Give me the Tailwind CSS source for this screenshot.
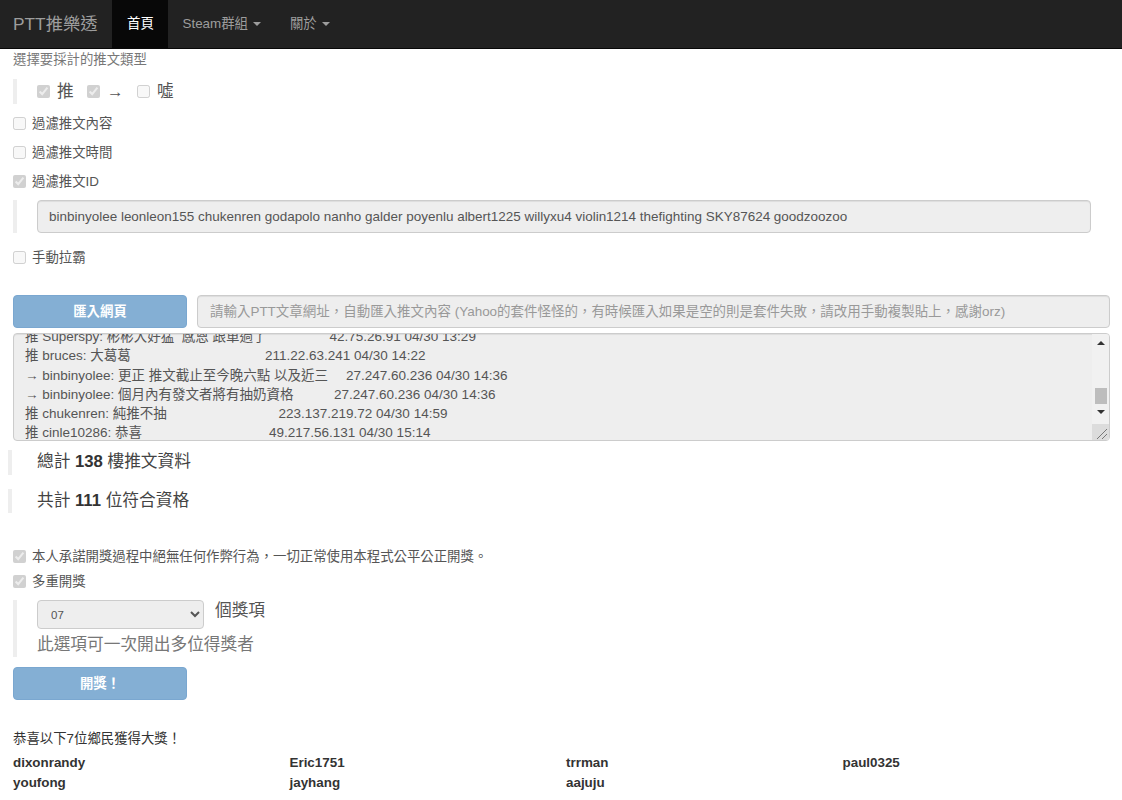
<!DOCTYPE html>
<html lang="zh-Hant">
<head>
<meta charset="utf-8">
<title>PTT推樂透</title>
<script src="https://cdn.jsdelivr.net/npm/@tailwindcss/browser@4"></script>
</head>
<body class="bg-white text-[#333] text-[13.4px] leading-[19.3px] font-['Liberation_Sans','Noto_Sans_CJK_TC',sans-serif] h-[800px] overflow-hidden">
<nav class="h-[49px] bg-[#222] border-b border-[#080808] flex text-[#9d9d9d]">
  <a class="pl-[13px] pr-[15px] text-[17.3px] leading-[48px]">PTT推樂透</a>
  <a class="w-[56px] bg-[#080808] text-white leading-[48px] text-center">首頁</a>
  <a class="px-[14px] leading-[48px] flex items-center gap-[5px]">Steam群組<span class="w-0 h-0 border-x-[4px] border-x-transparent border-t-[4px] border-t-[#9d9d9d]"></span></a>
  <a class="px-[15px] leading-[48px] flex items-center gap-[5px]">關於<span class="w-0 h-0 border-x-[4px] border-x-transparent border-t-[4px] border-t-[#9d9d9d]"></span></a>
</nav>
<main class="pl-[13px] pr-[12px]">
  <p class="text-[#777] mt-[1px] h-[19px]">選擇要採計的推文類型</p>
  <div class="mt-[10px] h-[25px] border-l-[4px] border-[#eee] pl-[20px] flex items-center text-[16.7px] text-[#555]">
    <input type="checkbox" checked disabled class="mr-[7px]"><span class="w-[30px]">推</span>
    <input type="checkbox" checked disabled class="mr-[7px]"><span class="w-[30px]">→</span>
    <input type="checkbox" disabled class="mr-[7px]"><span>噓</span>
  </div>
  <label class="flex items-center mt-[10px] h-[19px] text-[#555]"><input type="checkbox" disabled class="mr-[6px]">過濾推文內容</label>
  <label class="flex items-center mt-[10px] h-[19px] text-[#555]"><input type="checkbox" disabled class="mr-[6px]">過濾推文時間</label>
  <label class="flex items-center mt-[10px] h-[19px] text-[#555]"><input type="checkbox" checked disabled class="mr-[6px]">過濾推文ID</label>
  <div class="mt-[9px] h-[33px] border-l-[4px] border-[#eee] pl-[20px] pr-[19px]">
    <input disabled value="binbinyolee leonleon155 chukenren godapolo nanho galder poyenlu albert1225 willyxu4 violin1214 thefighting SKY87624 goodzoozoo" class="w-full h-[33px] px-[11px] bg-[#eee] border border-[#ccc] rounded-[4px] text-[13.47px] text-[#555] shadow-[inset_0_1px_1px_rgba(0,0,0,0.075)]">
  </div>
  <label class="flex items-center mt-[15px] h-[19px] text-[#555]"><input type="checkbox" disabled class="mr-[6px]">手動拉霸</label>
  <div class="mt-[28px] flex gap-[10px] h-[33px]">
    <button disabled class="w-[174px] bg-[#84afd4] border border-[#7aa7d0] rounded-[4px] text-white font-bold">匯入網頁</button>
    <input disabled placeholder="請輸入PTT文章網址，自動匯入推文內容 (Yahoo的套件怪怪的，有時候匯入如果是空的則是套件失敗，請改用手動複製貼上，感謝orz)" class="flex-1 px-[12px] bg-[#eee] border border-[#ccc] rounded-[4px] text-[13.47px] placeholder:text-[#999] shadow-[inset_0_1px_1px_rgba(0,0,0,0.075)]">
  </div>
  <div class="relative mt-[5px] h-[108px] bg-[#eee] border border-[#ccc] rounded-[4px] overflow-hidden pl-[11px] text-[13.5px] leading-[19.3px] text-[#555] shadow-[inset_0_1px_1px_rgba(0,0,0,0.075)]">
    <div class="-mt-[7px] flex"><span class="w-[304.5px] whitespace-pre">推 Superspy: 彬彬大好猛  感恩 跟單過了</span><span>42.75.26.91 04/30 13:29</span></div>
    <div class="flex"><span class="w-[240px]">推 bruces: 大葛葛</span><span>211.22.63.241 04/30 14:22</span></div>
    <div class="flex"><span class="w-[321px]">→ binbinyolee: 更正 推文截止至今晚六點 以及近三</span><span>27.247.60.236 04/30 14:36</span></div>
    <div class="flex"><span class="w-[309px]">→ binbinyolee: 個月內有發文者將有抽奶資格</span><span>27.247.60.236 04/30 14:36</span></div>
    <div class="flex"><span class="w-[253.5px]">推 chukenren: 純推不抽</span><span>223.137.219.72 04/30 14:59</span></div>
    <div class="flex"><span class="w-[244px]">推 cinle10286: 恭喜</span><span>49.217.56.131 04/30 15:14</span></div>
    <div class="absolute top-0 right-0 bottom-0 w-[17px] bg-[#f1f1f1] flex flex-col items-center">
      <span class="mt-[7px] w-0 h-0 border-x-[4px] border-x-transparent border-b-[4px] border-b-[#333]"></span>
      <span class="mt-[43px] w-[12px] h-[16px] bg-[#bdbdbd]"></span>
      <span class="mt-[6px] w-0 h-0 border-x-[4px] border-x-transparent border-t-[4px] border-t-[#333]"></span>
      <svg class="mt-auto bg-[#dcdcdc]" width="17" height="16" viewBox="0 0 17 16"><path d="M5 15 15 5M10 15l5-5" stroke="#777" stroke-width="1" fill="none"/></svg>
    </div>
  </div>
  <div class="-ml-[5px] mt-[9px] h-[25px] border-l-[4px] border-[#eee] pl-[25px] text-[16.7px] leading-[23px] text-[#444]">總計 <b class="text-[#333]">138</b> 樓推文資料</div>
  <div class="-ml-[5px] mt-[14px] h-[24px] border-l-[4px] border-[#eee] pl-[25px] text-[16.7px] leading-[24px] text-[#444]">共計 <b class="text-[#333]">111</b> 位符合資格</div>
  <label class="flex items-center mt-[34px] h-[19px] text-[#555]"><input type="checkbox" checked disabled class="mr-[6px]">本人承諾開獎過程中絕無任何作弊行為，一切正常使用本程式公平公正開獎。</label>
  <label class="flex items-center mt-[6px] h-[19px] text-[#555]"><input type="checkbox" checked disabled class="mr-[6px]">多重開獎</label>
  <div class="mt-[9px] h-[57px] border-l-[4px] border-[#eee] pl-[20px]">
    <div class="flex h-[29px]">
      <select disabled class="w-[167px] h-[29px] pl-[9px] bg-[#eee] border border-[#ccc] rounded-[4px] text-[11.5px] text-[#555] opacity-100"><option>07</option></select>
      <span class="ml-[11px] text-[16.7px] leading-[21px] text-[#555]">個獎項</span>
    </div>
    <div class="mt-[4px] text-[16.7px] leading-[24px] text-[#777]">此選項可一次開出多位得獎者</div>
  </div>
  <button disabled class="block mt-[10px] w-[174px] h-[33px] bg-[#84afd4] border border-[#7aa7d0] rounded-[4px] text-white font-bold">開獎！</button>
  <p class="mt-[29px] h-[19px]">恭喜以下7位鄉民獲得大獎！</p>
  <div class="mt-[5px] w-[1106px] grid grid-cols-4 font-bold text-[13.4px] leading-[20px]">
    <div>dixonrandy</div><div>Eric1751</div><div>trrman</div><div>paul0325</div>
    <div>youfong</div><div>jayhang</div><div>aajuju</div>
  </div>
</main>
</body>
</html>
